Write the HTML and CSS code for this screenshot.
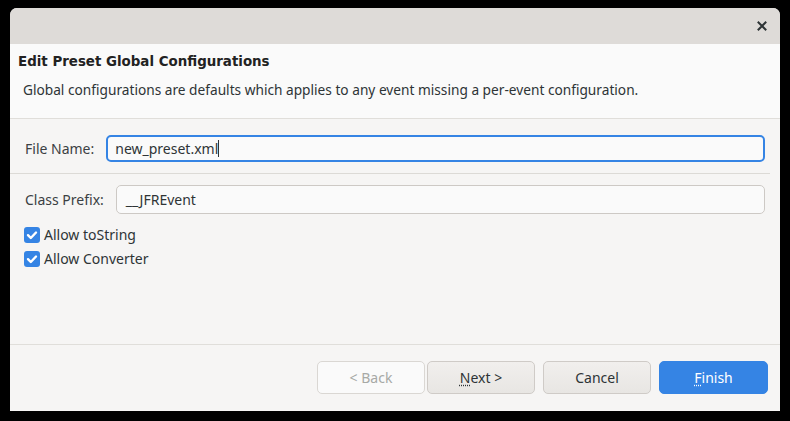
FILE: index.html
```html
<!DOCTYPE html>
<html>
<head>
<meta charset="utf-8">
<link rel="stylesheet" href="styles.css">
</head>
<body>
<div class="window">
  <div class="titlebar">
    <svg class="close" width="10" height="10" viewBox="0 0 10 10"><path d="M1.5 1.5 L8.5 8.5 M8.5 1.5 L1.5 8.5" stroke="#2e3436" stroke-width="2" stroke-linecap="square"/></svg>
  </div>
  <div class="header">
    <div class="heading">Edit Preset Global Configurations</div>
    <div class="desc">Global configurations are defaults which applies to any event missing a per-event configuration.</div>
  </div>
  <div class="content">
    <div class="row row-file">
      <span class="label">File Name:</span>
      <div class="input focused">new_preset.xml<span class="caret"></span></div>
    </div>
    <div class="sep"></div>
    <div class="row row-prefix">
      <span class="label">Class Prefix:</span>
      <div class="input plain">__JFREvent</div>
    </div>
    <div class="checks">
      <label class="check"><span class="box"><svg width="16" height="16" viewBox="0 0 16 16"><path d="M4 8.2 L6.8 11 L12 5.5" fill="none" stroke="#fff" stroke-width="2.4" stroke-linecap="round" stroke-linejoin="round"/></svg></span>Allow toString</label>
      <label class="check"><span class="box"><svg width="16" height="16" viewBox="0 0 16 16"><path d="M4 8.2 L6.8 11 L12 5.5" fill="none" stroke="#fff" stroke-width="2.4" stroke-linecap="round" stroke-linejoin="round"/></svg></span>Allow Converter</label>
    </div>
  </div>
  <div class="footer">
    <div class="btn disabled">&lt; Back</div>
    <div class="btn next"><u>N</u>ext &gt;</div>
    <div class="btn cancel">Cancel</div>
    <div class="btn primary"><u>F</u>inish</div>
  </div>
</div>
</body>
</html>
```
FILE: styles.css
```css
html, body {
  margin: 0;
  padding: 0;
  background: #000;
}
body {
  font-family: "Noto Sans", "DejaVu Sans", sans-serif;
  font-size: 14px;
  color: #2e3436;
}
.window {
  margin: 8px 10px 0 10px;
  width: 770px;
  height: 403px;
  border-radius: 7px 7px 0 0;
  background: #f6f5f4;
  overflow: hidden;
  display: flex;
  flex-direction: column;
}
.titlebar {
  height: 36px;
  background: #dedbd8;
  display: flex;
  align-items: center;
  justify-content: flex-end;
  padding-right: 13px;
  box-sizing: border-box;
  flex: none;
}
.header {
  height: 75px;
  box-sizing: border-box;
  background: #fafafa;
  border-bottom: 1px solid #e0deda;
  padding: 6px 8px 0 8px;
  flex: none;
}
.heading {
  font-family: "DejaVu Sans", sans-serif;
  font-weight: bold;
  font-size: 13.4px;
  color: #222;
  line-height: 24px;
}
.desc {
  padding-left: 5px;
  font-size: 13.7px;
  line-height: 20px;
  margin-top: 6px;
  color: #2e3436;
}
.content {
  flex: 1;
  padding: 16px 15px 0 15px;
  box-sizing: border-box;
  display: flex;
  flex-direction: column;
}
.row {
  display: flex;
  align-items: center;
  gap: 12px;
}
.label {
  color: #3b4043;
  flex: none;
}
.input {
  flex: 1;
  box-sizing: border-box;
  border-radius: 5px;
  background: #fafafa;
  display: flex;
  align-items: center;
}
.input.focused {
  height: 27px;
  border: 2px solid #3584e4;
  padding-left: 7px;
}
.caret {
  display: inline-block;
  width: 1px;
  height: 17px;
  background: #2e3436;
}
.input.plain {
  height: 29px;
  border: 1px solid #cdc9c5;
  padding-left: 9px;
}
.sep {
  height: 1px;
  background: #dcdad6;
  margin: 11px -5px 11px -15px;
}
.checks {
  margin-top: 12px;
  display: flex;
  flex-direction: column;
  gap: 7px;
}
.check {
  display: flex;
  align-items: center;
  height: 17px;
  color: #2e3436;
}
.box {
  width: 16px;
  height: 16px;
  border-radius: 3px;
  background: #3584e4;
  margin-left: -1px;
  margin-right: 4px;
  display: flex;
}
.footer {
  flex: none;
  height: 67px;
  box-sizing: border-box;
  border-top: 1px solid #e0deda;
  padding: 16px 12px 17px 0;
  display: flex;
  justify-content: flex-end;
  gap: 2px;
}
.btn {
  width: 108px;
  height: 33px;
  box-sizing: border-box;
  border-radius: 5px;
  border: 1px solid #cfcbc7;
  background: linear-gradient(#f1efed, #e8e6e3);
  display: flex;
  align-items: center;
  justify-content: center;
  color: #2e3436;
}
.btn u {
  text-decoration-style: dotted;
  text-underline-offset: 2px;
}
.btn.disabled {
  background: #fafafa;
  border-color: #dad7d3;
  color: #a7a9a6;
}
.btn.cancel {
  margin-left: 6px;
}
.btn.primary {
  margin-left: 6px;
  width: 109px;
  background: #3584e4;
  border-color: #3584e4;
  color: #fff;
}
```
